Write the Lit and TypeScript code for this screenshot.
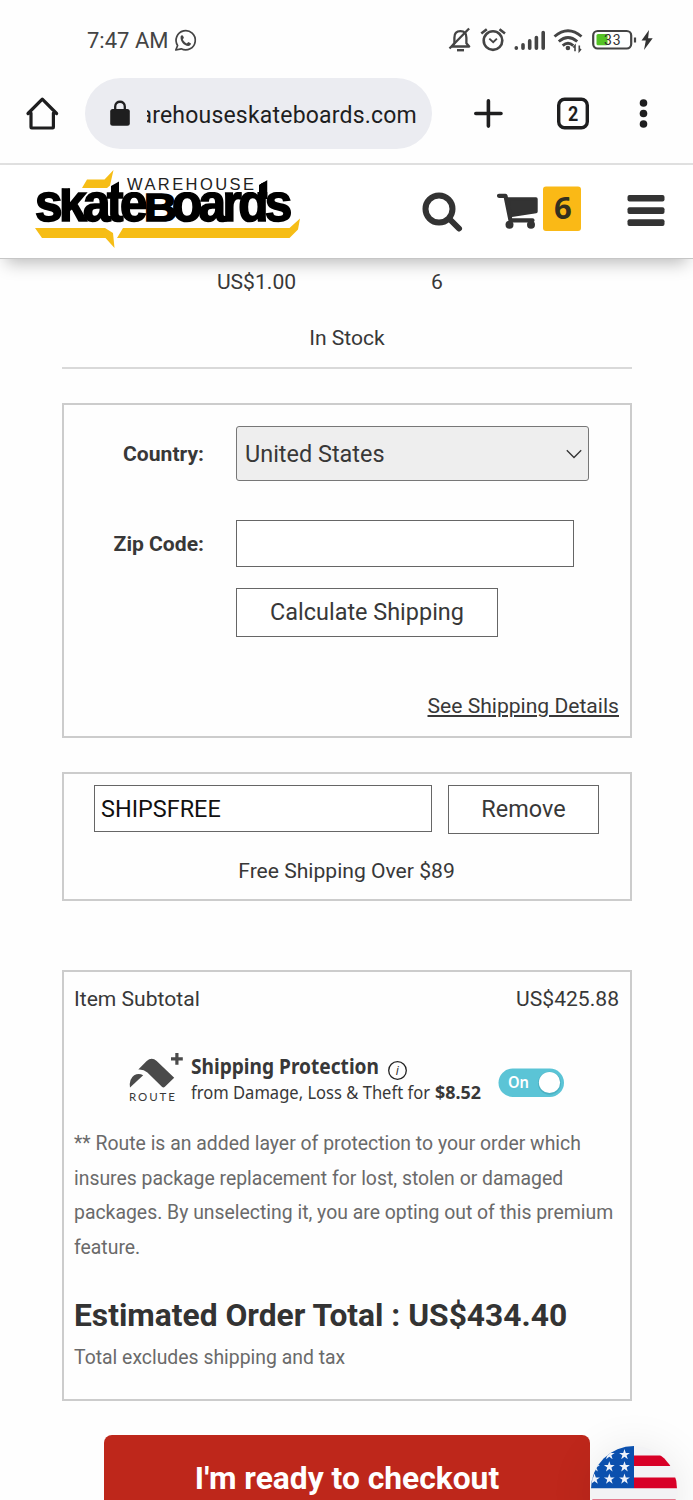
import { LitElement, html, svg, css } from "lit";
import { customElement, state } from "lit/decorators.js";

@customElement("status-bar")
class StatusBar extends LitElement {
  static styles = css`
    :host { display: flex; height: 78px; box-sizing: border-box; padding: 2px 0 0 87px; align-items: center; color: #444; font-size: 22px; }
    .time { white-space: nowrap; width: 84px; }
    svg { display: block; flex: none; }
    .icons { margin-left: 245px; }
  `;
  render() {
    return html`
      <span class="time">7:47 AM</span>
      <svg width="30" height="30" viewBox="170 25 30 30" fill="none" stroke="#444">
        <path d="M176.600 45.500a9.600 9.600 0 1 1 3.600 3.300L174.800 50z" stroke-width="1.700" stroke-linejoin="round" />
        <path d="M179.600 36.400c.7-1.500 2-1.500 2.500-.4l.8 1.800-1.100 1.800c.9 1.900 2.200 3.100 4 3.800l1.500-1.400 2.500 1.300c.5 1.300-1 2.700-2.600 2.700-4.200-.4-8.200-4.800-7.600-9.600z" fill="#444" stroke="none" />
      </svg>
      <svg class="icons" width="214" height="36" viewBox="446 22 214 36" fill="none" stroke="#444">
        <path d="M452 46.500l2.400-3.200v-5.600c0-4 2.300-6.500 6-6.500s6 2.500 6 6.500v5.600l2.800 3.200z" stroke-width="2.300" stroke-linejoin="round" />
        <path d="M449.500 48.500l19.600-20" stroke-width="2.300" />
        <path d="M457 50.200h7" stroke-width="2.400" />
        <circle cx="493" cy="40.600" r="9.300" stroke-width="2.600" />
        <path d="M489.300 38.600l3.900 3.600 3.700-3.600" stroke-width="1.900" />
        <path d="M481.300 33.500l5.500-4.300M505 33.500l-5.500-4.300" stroke-width="2.600" />
        <g stroke-width="3.600" stroke-linecap="round">
          <path d="M516.300 48.200v-.5M523 48.200v-3.400M529.700 48.200v-7.300M536.400 48.200v-10.600M543.200 48.200v-15.600" />
        </g>
        <g stroke-width="2.900">
          <path d="M554.500 36.500q13.500-11.500 27 0" />
          <path d="M558.800 41.500q9.200-8 18.400 0" />
          <path d="M562.700 45.600q5.300-4.600 10.600 0" />
        </g>
        <circle cx="567.900" cy="48" r="2.300" fill="#444" stroke="none" />
        <path d="M575 51.200v-5.600l-1.700 2M579.300 45.400v5.600l1.700-2" stroke-width="1.600" />
        <rect x="593.200" y="31" width="38" height="17.500" rx="4.500" stroke-width="2.200" />
        <rect x="596.500" y="34" width="11" height="11.300" rx="1.500" fill="#54c225" stroke="none" />
        <text x="604" y="44.800" font-family="Roboto, sans-serif" font-size="14" fill="#333" stroke="none" textLength="16.500">33</text>
        <path d="M635 37.500v5" stroke-width="2.200" />
        <path d="M649 30l-7.500 10.600h4.300L644 50l8.700-11.800h-4.600z" fill="#333" stroke="none" />
      </svg>
    `;
  }
}

@customElement("browser-bar")
class BrowserBar extends LitElement {
  static styles = css`
    :host { display: flex; height: 87px; box-sizing: border-box; border-bottom: 2px solid #e0e0e0; color: #1e1e1f; }
    svg { display: block; flex: none; }
    .home { width: 85px; height: 71px; }
    .pill { width: 347px; height: 71px; box-sizing: border-box; padding-left: 24px; border-radius: 36px; background: #ebecf1; display: flex; align-items: center; }
    .clip { margin: 4px 0 0 15px; width: 270px; overflow: hidden; display: flex; justify-content: flex-end; font-size: 23px; line-height: 34px; letter-spacing: 0.2px; white-space: nowrap; }
  `;
  render() {
    return html`
      <svg class="home" viewBox="0 78 85 71" fill="none" stroke="#1e1e1f" stroke-width="3.200" stroke-linejoin="round" stroke-linecap="round">
        <path d="M31 113v14.300q0 .7.700.7h21q.7 0 .7-.700V113M28 113.500L42.300 99.200 56.600 113.500" />
      </svg>
      <div class="pill">
        <svg width="23" height="40" viewBox="109 94 23 40">
          <rect x="110.200" y="109" width="19.600" height="16.700" rx="2.500" fill="#1e1e1f" />
          <path d="M115.200 110v-3.500c0-6.300 9.600-6.300 9.600 0V110" fill="none" stroke="#1e1e1f" stroke-width="2.300" />
        </svg>
        <div class="clip"><span>warehouseskateboards.com</span></div>
      </div>
      <svg width="261" height="71" viewBox="432 78 261 71" fill="none" stroke="#1e1e1f" stroke-linecap="round">
        <path d="M475.800 113.500h25.200M488.400 100.900v25.200" stroke-width="3.600" />
        <rect x="558.700" y="99.200" width="28.600" height="28.600" rx="6" stroke-width="3.400" />
        <text x="568" y="120.800" font-family="Roboto, sans-serif" font-weight="700" font-size="21" fill="#1e1e1f" stroke="none" textLength="10.300" lengthAdjust="spacingAndGlyphs">2</text>
        <g fill="#1e1e1f" stroke="none"><circle cx="643.500" cy="103" r="3.800" /><circle cx="643.500" cy="113.500" r="3.800" /><circle cx="643.500" cy="124" r="3.800" /></g>
      </svg>
    `;
  }
}

@customElement("shop-header")
class ShopHeader extends LitElement {
  static styles = css`
    :host { display: block; height: 94px; box-sizing: border-box; background: #fff; border-bottom: 1px solid #c6c6c6; box-shadow: 0 10px 16px -6px rgba(0, 0, 0, 0.27); position: relative; }
    svg { display: block; }
  `;
  render() {
    return html`
      <svg width="693" height="93" viewBox="0 165 693 93">
        <defs>
          <clipPath id="lettering"><path d="M30 188.300h70V186l11 0 8-4.500V192h140v-7l8.500-5V192h40v40H30z" /></clipPath>
        </defs>
        <g fill="#f6bd16">
          <path d="M82 188l5-8.500h17.500l9-9.500-3.500 15.500-3 2.500z" />
          <path d="M35 228h70l8 5 1.500 15-9-10H42z" />
          <path d="M123 228h166.500l10.500-9.500-2 11-8.500 8.500H117z" />
        </g>
        <g clip-path="url(#lettering)" font-family="Liberation Sans, Arial, sans-serif" font-weight="700" fill="#000" stroke="#000" stroke-width="1.700">
          <text transform="translate(35 221.300) scale(.97 1)" font-size="51" textLength="116">skate</text>
          <text x="144" y="221.300" font-size="39.500" textLength="33" lengthAdjust="spacingAndGlyphs">B</text>
          <text transform="translate(172 221.300) scale(.97 1)" font-size="51" textLength="124">oards</text>
          <path d="M111 191v-6l8-5v14h-8zM259.500 196v-12l8-5v20h-8z" stroke="none" />
        </g>
        <text x="127" y="190" font-family="Liberation Sans, Arial, sans-serif" font-size="16.500" fill="#222" textLength="127">WAREHOUSE</text>
        <circle cx="439" cy="209" r="13.500" fill="none" stroke="#333" stroke-width="6" />
        <path d="M449.500 219l9.500 9.500" stroke="#333" stroke-width="6" stroke-linecap="round" />
        <g fill="none" stroke="#333" stroke-linecap="round" stroke-linejoin="round">
          <path d="M499 195.800h6.500l5 24.500h22" stroke-width="4.200" />
          <path d="M508 199h28v12.500l-26 4z" fill="#333" stroke-width="3.400" />
        </g>
        <g fill="#333"><circle cx="509.500" cy="224.700" r="4" /><circle cx="531" cy="224.700" r="4" /></g>
        <rect x="543" y="186.500" width="38" height="44.500" rx="3" fill="#fab916" />
        <text x="562.800" y="219" text-anchor="middle" font-family="Open Sans, sans-serif" font-weight="700" font-size="31" fill="#33301f">6</text>
        <g fill="#333"><rect x="627.500" y="195" width="37" height="6.600" rx="2" /><rect x="627.500" y="207.300" width="37" height="6.600" rx="2" /><rect x="627.500" y="219.300" width="37" height="6.600" rx="2" /></g>
      </svg>
    `;
  }
}

@customElement("flag-badge")
class FlagBadge extends LitElement {
  static styles = css`
    :host { display: block; width: 86px; height: 86px; border-radius: 50%; background: #f3f3f5; overflow: hidden; }
    svg { display: block; }
  `;
  render() {
    const columns = [594.5, 609.3, 624.5];
    const rows = [1454.5, 1466.7, 1479];
    return html`
      <svg width="86" height="86" viewBox="591 1446 86 86">
        <g fill="#d80027"><path d="M634 1455.500h43v10.500h-43zM634 1477.500h43v10.800h-43zM591 1499.400h86v11h-86z" /></g>
        <path d="M591 1446h43v42.300h-43z" fill="#0b50ae" />
        ${rows.map((y) => columns.map((x) => svg`<path transform="translate(${x} ${y})" fill="#eef2fa" d="M0-5.500l1.300 3.900h4.100L2.100.8l1.200 3.900L0 2.300l-3.300 2.400 1.200-3.900-3.300-2.400h4.100z" />`))}
      </svg>
    `;
  }
}

@customElement("app-root")
class AppRoot extends LitElement {
  @state() private protectedOrder = true;

  static styles = css`
    :host { display: block; position: relative; width: 693px; height: 1500px; overflow: hidden; background: #fefefe; color: #383838; font-family: Roboto, sans-serif; font-size: 21.100px; }
    * { box-sizing: border-box; }
    main { padding: 0 61px 0 62px; display: flex; flex-direction: column; }
    .item { display: flex; height: 46px; line-height: 46px; }
    .price { width: 389px; text-align: center; }
    .qty { width: 90px; margin-left: -20px; }
    .stock { height: 64px; line-height: 66px; text-align: center; border-bottom: 2px solid #d9d9d9; }
    .box { border: 2px solid #ccc; width: 570px; }
    .ship { margin-top: 34px; height: 335px; padding: 21px 0 0 0; display: flex; flex-direction: column; }
    .field { display: flex; }
    .label { width: 140px; margin-right: 32px; text-align: right; font-weight: 700; }
    .select { width: 353px; height: 55px; border: 1px solid #777; border-radius: 3px; background: #eee; display: flex; align-items: center; justify-content: space-between; padding: 0 6px 0 8px; font-size: 23.450px; }
    .l1 { line-height: 55px; height: 55px; }
    .l2 { line-height: 47px; height: 47px; }
    .input { width: 338px; height: 47px; border: 1px solid #666; background: #fff; font-size: 23.450px; line-height: 47px; padding-left: 6px; color: #111; }
    .zip { margin-top: 39px; }
    .btn { border: 1px solid #666; background: #fff; font-size: 23.450px; text-align: center; height: 49px; line-height: 47px; }
    .calc { margin: 21px 0 0 172px; width: 262px; }
    .details { align-self: flex-end; margin: 54px 11px 0 0; line-height: 30px; text-decoration: underline; }
    .coupon { margin-top: 34px; height: 129px; padding: 11px 31px 0 30px; }
    .row { display: flex; justify-content: space-between; }
    .remove { width: 151px; }
    .note { line-height: 30px; margin-top: 22px; text-align: center; }
    .summary { margin-top: 69px; height: 431px; padding: 11px 11px 0 10px; }
    .line { line-height: 32px; }
    .route { display: block; margin: 25px 0 0 40px; }
    .legal { margin: 17px 0 0; font-size: 19.400px; line-height: 34.700px; color: #6a6a6a; white-space: nowrap; }
    .total { font-size: 31.750px; line-height: 40px; font-weight: 700; margin-top: 30px; white-space: nowrap; color: #333; }
    .tax { font-size: 19.400px; line-height: 30px; margin-top: 7px; color: #6a6a6a; }
    .checkout { margin: 34px 0 0 42px; width: 486px; height: 86px; border-radius: 8px; background: #be271b; color: #fff; font-weight: 700; font-size: 31.750px; line-height: 88px; text-align: center; }
    .float { position: absolute; left: 591px; top: 1446px; border-radius: 50%; box-shadow: 0 4px 45px rgba(0, 0, 0, 0.1); }
  `;

  render() {
    return html`
      <status-bar></status-bar>
      <browser-bar></browser-bar>
      <shop-header></shop-header>
      <main>
        <div class="item"><span class="price">US$1.00</span><span class="qty">6</span></div>
        <div class="stock">In Stock</div>
        <section class="box ship">
          <div class="field"><span class="label l1">Country:</span>
            <div class="select"><span>United States</span>
              <svg width="16" height="10" viewBox="0 0 16 10" fill="none" stroke="#333" stroke-width="1.300"><path d="M.8 1.300L8 8.500l7.200-7.200" /></svg>
            </div>
          </div>
          <div class="field zip"><span class="label l2">Zip Code:</span><div class="input"></div></div>
          <div class="btn calc">Calculate Shipping</div>
          <span class="details">See Shipping Details</span>
        </section>
        <section class="box coupon">
          <div class="row"><div class="input">SHIPSFREE</div><div class="btn remove">Remove</div></div>
          <div class="note">Free Shipping Over $89</div>
        </section>
        <section class="box summary">
          <div class="row line"><span>Item Subtotal</span><span>US$425.88</span></div>
          <svg class="route" width="470" height="70" viewBox="114 1040 470 70">
            <g fill="#4a4a4a">
              <path d="M138.300 1069.500l8.400-8.500q5-4.500 10 0l17.500 16.800-9.300 9q-1.500 1.200-3 0l-14.500-14.300q-4-3.500-9.100-3z" />
              <path d="M130 1087.500q-1.200-8.500 4.200-12.200 4.500-2.500 9 0z" />
              <path d="M175.300 1053h3.200v4.300h4.300v3.200h-4.300v4.300h-3.200v-4.300h-4.300v-3.200h4.300z" />
            </g>
            <g font-family="Noto Sans, sans-serif" fill="#383838">
              <text x="129" y="1101" font-family="Lato, sans-serif" font-size="11.500" textLength="46">ROUTE</text>
              <text x="191" y="1074" font-weight="700" font-size="21.500" textLength="188" lengthAdjust="spacingAndGlyphs">Shipping Protection</text>
              <text x="191" y="1099" font-size="18.500" textLength="239" lengthAdjust="spacingAndGlyphs">from Damage, Loss &amp; Theft for</text>
              <text x="435" y="1099" font-weight="700" font-size="18" textLength="46" lengthAdjust="spacingAndGlyphs">$8.52</text>
            </g>
            <circle cx="397.500" cy="1070.500" r="8.800" fill="none" stroke="#222" stroke-width="1.300" />
            <text x="397.300" y="1075" text-anchor="middle" font-family="Open Sans, sans-serif" font-style="italic" font-size="12" fill="#222">i</text>
            <rect x="498.500" y="1068.500" width="65.500" height="28.500" rx="14.250" fill="#5bc4d6" />
            <text x="508" y="1088.300" font-family="Noto Sans, sans-serif" font-weight="600" font-size="16" fill="#fff" textLength="21" lengthAdjust="spacingAndGlyphs">${this.protectedOrder ? "On" : "Off"}</text>
            <circle cx="549.500" cy="1083.200" r="11.500" fill="#2f8fa0" opacity=".35" />
            <circle cx="549.500" cy="1082.500" r="10.600" fill="#fff" />
          </svg>
          <p class="legal">** Route is an added layer of protection to your order which<br />insures package replacement for lost, stolen or damaged<br />packages. By unselecting it, you are opting out of this premium<br />feature.</p>
          <div class="total">Estimated Order Total : US$434.40</div>
          <div class="tax">Total excludes shipping and tax</div>
        </section>
        <div class="checkout">I'm ready to checkout</div>
      </main>
      <flag-badge class="float"></flag-badge>
    `;
  }
}
